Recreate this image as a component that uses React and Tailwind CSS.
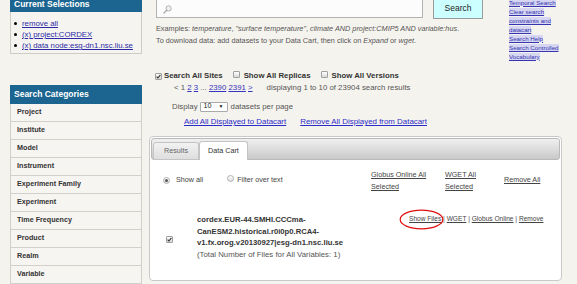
import React from "react";

const categories = [
  "Project",
  "Institute",
  "Model",
  "Instrument",
  "Experiment Family",
  "Experiment",
  "Time Frequency",
  "Product",
  "Realm",
  "Variable",
];

const Check = ({ checked }) => (
  <span className="inline-flex w-[7px] h-[7px] shrink-0 items-center justify-center border border-[#a0a0a0] rounded-[1px] bg-linear-to-b from-white to-[#dadada]">
    {checked && (
      <svg width="5" height="5" viewBox="0 0 5 5">
        <path d="M0.6 2.7 L1.9 4 L4.4 0.8" fill="none" stroke="#333" strokeWidth="1.1" />
      </svg>
    )}
  </span>
);

const Radio = ({ checked }) => (
  <span className="inline-flex w-[7px] h-[7px] shrink-0 items-center justify-center rounded-full border border-[#b0b0b0] bg-linear-to-b from-white to-[#dedede]">
    {checked && <span className="w-[3px] h-[3px] rounded-full bg-[#555]" />}
  </span>
);

export default function App() {
  return (
    <div className="w-[577px] h-[284px] overflow-hidden bg-[#f5f3ee] flex pl-[10px] font-['Liberation_Sans',Arial,sans-serif]">
      {/* --- LEFT COLUMN --- */}
      <aside className="w-[132px] shrink-0">
        <div className="h-[12px] bg-[#1b6590] text-white font-bold text-[8.5px] leading-none pl-[4px] flex items-end pb-[4px]">
          Current Selections
        </div>
        <ul className="h-[42px] border border-t-0 border-[#cfccc7] bg-[#f6f4f0] pt-[6px] pl-[3px] text-[7.8px] leading-[11px]">
          {["remove all", "(x) project:CORDEX", "(x) data node:esg-dn1.nsc.liu.se"].map((t) => (
            <li key={t} className="flex items-center h-[11px]">
              <span className="w-[3px] h-[3px] rounded-full bg-black mr-[5px]" />
              <a className="text-[#2a2aa6] underline">{t}</a>
            </li>
          ))}
        </ul>

        <div className="mt-[31px] h-[19px] bg-[#1b6590] text-white font-bold text-[8.5px] pl-[4px] flex items-center">
          Search Categories
        </div>
        {categories.map((c) => (
          <div
            key={c}
            className="h-[18px] border-x border-b border-[#d3d0ca] bg-[#f7f5f1] pl-[6px] flex items-center text-[7.2px] font-bold text-[#333]"
          >
            {c}
          </div>
        ))}
      </aside>

      {/* --- MAIN --- */}
      <main className="w-[413px] ml-[7px] shrink-0">
        <div className="flex">
          <div className="w-[360px]">
            <div className="flex items-start -mt-[2px] pl-[7px]">
              <div className="w-[267px] h-[20px] border border-[#b3b3b3] bg-[#fcfcfc] flex items-center pl-[6px]">
                <svg width="9" height="9" viewBox="0 0 9 9" className="mt-[2px]">
                  <circle cx="5.6" cy="3.4" r="2.6" fill="#f2f2f2" stroke="#a8a8a8" strokeWidth="0.9" />
                  <path d="M3.7 5.3 L1 8" stroke="#a8a8a8" strokeWidth="1.3" strokeLinecap="round" />
                </svg>
              </div>
              <button className="ml-[10px] w-[50px] h-[21px] bg-[#ccffff] border border-[#9a9a9a] text-[8.5px] text-[#222] flex items-center justify-center">
                Search
              </button>
            </div>
            <div className="pl-[7px] mt-[4px] text-[7.3px] leading-[12px] text-[#555] whitespace-nowrap">
              <p>
                Examples: <i>temperature</i>, <i>"surface temperature"</i>, <i>climate AND project:CMIP5 AND variable:hus</i>.
              </p>
              <p>
                To download data: add datasets to your Data Cart, then click on <i>Expand</i> or <i>wget</i>.
              </p>
            </div>
            <div className="mt-[24px] h-[10px] pl-[6px] flex items-center text-[7.8px] font-bold text-[#333] whitespace-nowrap">
              <Check checked />
              <span className="ml-[2px]">Search All Sites</span>
              <span className="ml-[10px]"><Check /></span>
              <span className="ml-[4px]">Show All Replicas</span>
              <span className="ml-[10px]"><Check /></span>
              <span className="ml-[4px]">Show All Versions</span>
            </div>
          </div>
          <div className="w-[53px] -mt-[2.5px] text-[6.2px] leading-[9px]">
            {["Temporal Search", "Clear search constraints and datacart", "Search Help", "Search Controlled Vocabulary"].map((t) => (
              <div key={t}>
                <a className="text-[#3535b0] underline bg-[#d6d6f2]">{t}</a>
              </div>
            ))}
          </div>
        </div>

        {/* pagination */}
        <div className="mt-[2px] h-[10px] pl-[25px] flex items-center text-[7.8px] text-[#555] whitespace-nowrap">
          <span>
            &lt; 1 <a className="text-[#3333bb] underline">2</a> <a className="text-[#3333bb] underline">3</a> ...{" "}
            <a className="text-[#3333bb] underline">2390</a> <a className="text-[#3333bb] underline">2391</a>{" "}
            <a className="text-[#3333bb] underline">&gt;</a>
          </span>
          <span className="ml-[14px]">displaying 1 to 10 of 23904 search results</span>
        </div>

        <div className="mt-[8px] h-[11px] pl-[23px] flex items-center text-[7.8px] text-[#555]">
          <span>Display</span>
          <span className="ml-[2px] w-[28px] h-[10px] border border-[#aaa] rounded-[1px] bg-white flex items-center pl-[3px] text-[7.2px] text-[#222]">
            10
            <span className="ml-[7px] text-[5px]">▼</span>
          </span>
          <span className="ml-[3px]">datasets per page</span>
        </div>

        <div className="mt-[5px] h-[10px] pl-[35px] flex items-center text-[7.9px] whitespace-nowrap">
          <a className="text-[#2b2bc8] underline">Add All Displayed to Datacart</a>
          <a className="ml-[14px] text-[#2b2bc8] underline">Remove All Displayed from Datacart</a>
        </div>

        {/* --- PANEL --- */}
        <section className="mt-[9px] h-[145px] border border-[#c9c9c9] rounded-[4px] bg-white p-px">
          <div className="h-[22px] rounded-[3px] border border-[#b9b9b9] bg-linear-to-b from-[#f0f0f0] to-[#c9c9c9] flex items-end pl-px">
            <div className="-mb-px w-[46px] h-[18px] rounded-t-[3px] border border-[#c4c4c4] bg-linear-to-b from-[#f2f2f2] to-[#dedede] flex items-center justify-center text-[7.2px] text-[#666]">
              Results
            </div>
            <div className="-mb-px w-[49px] h-[19px] rounded-t-[3px] border border-b-0 border-[#c4c4c4] bg-white flex items-center justify-center text-[7.2px] text-[#333]">
              Data Cart
            </div>
          </div>

          <div className="mt-[9px] h-[23px] flex items-center text-[7.2px] text-[#444] whitespace-nowrap">
            <div className="w-[220px] pl-[12px] flex items-center">
              <Radio checked />
              <span className="ml-[6px]">Show all</span>
              <span className="ml-[24px]"><Radio /></span>
              <span className="ml-[3px]">Filter over text</span>
            </div>
            <div className="w-[74px] leading-[11.5px] underline">
              <div>Globus Online All</div>
              <div>Selected</div>
            </div>
            <div className="w-[59px] leading-[11.5px] underline">
              <div>WGET All</div>
              <div>Selected</div>
            </div>
            <div className="underline">Remove All</div>
          </div>

          <div className="mt-[22px] flex items-center">
            <div className="pl-[15px]">
              <Check checked />
            </div>
            <div className="ml-[24px] w-[212px] leading-[11.5px] text-[#333]">
              <div className="font-bold text-[7.7px]">
                cordex.EUR-44.SMHI.CCCma-
                <br />
                CanESM2.historical.r0i0p0.RCA4-
                <br />
                v1.fx.orog.v20130927|esg-dn1.nsc.liu.se
              </div>
              <div className="text-[7.8px] text-[#555]">(Total Number of Files for All Variables: 1)</div>
            </div>
            <div className="self-start text-[6.6px] leading-[9px] text-[#444] whitespace-nowrap relative">
              <span className="underline">Show Files</span> | <span className="underline">WGET</span> |{" "}
              <span className="underline">Globus Online</span> | <span className="underline">Remove</span>
              <svg width="45" height="21" viewBox="0 0 45 21" className="absolute -left-[10px] -top-[5px]">
                <ellipse cx="22.5" cy="10.5" rx="21.3" ry="9.3" fill="none" stroke="#e01010" strokeWidth="1.2" />
              </svg>
            </div>
          </div>
        </section>
      </main>
    </div>
  );
}
